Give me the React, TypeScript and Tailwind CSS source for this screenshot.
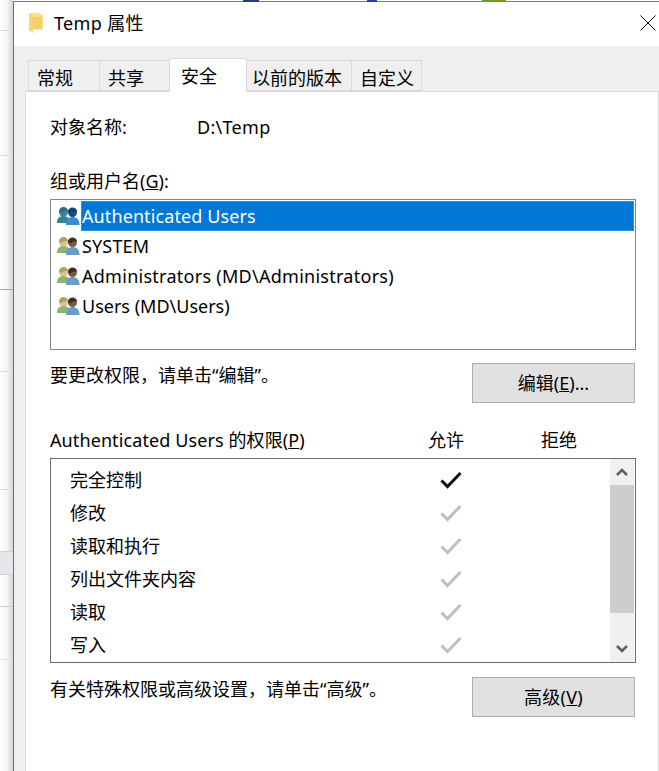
const sans = "font-['Noto_Sans','Noto_Sans_CJK_SC',sans-serif]";

function Folder() {
  return (
    <svg width="15" height="20" viewBox="0 0 15 20">
      <path d="M2 0h8l4 2v15H2z" fill="#fbe08e" />
      <path d="M0 0l4 1v19l-3-2H0z" fill="#f6d672" />
      <path d="M4 4h9v12H4z" fill="#f4cf66" />
      <path d="M4 16h10v1H4z" fill="#fdeeb8" />
    </svg>
  );
}

function Users({ blue }: { blue?: boolean }) {
  const leftHead = blue ? "#3f8198" : "#d8c48e";
  const leftHair = blue ? "#2d6f86" : "#b49f5c";
  const leftBody = blue ? "#2f8598" : "#8db56b";
  const rightHead = blue ? "#1c4e80" : "#7a5a40";
  const rightHair = blue ? "#163e68" : "#3e2e24";
  const rightBody = blue ? "#3d8bd0" : "#6b9bcb";
  return (
    <svg width="23" height="20" viewBox="0 0 23 20">
      <circle cx="6.500" cy="6" r="4.500" fill={leftHead} />
      <path d="M2 6a4.500 4.500 0 0 1 9-1c-3 0-5 0-6 2z" fill={leftHair} />
      <path d="M0 16c0-4 3-6 6.500-6s6.500 2 6.500 6v1H0z" fill={leftBody} />
      <circle cx="15.500" cy="6.500" r="4.500" fill={rightHead} />
      <path d="M11 6.500a4.500 4.500 0 0 1 9-1c-3 0-5 0-6 2z" fill={rightHair} />
      <path d="M9 18c0-4.500 3-7 6.500-7s7 2.500 7 7v1H9z" fill={rightBody} />
    </svg>
  );
}

function Check({ on }: { on?: boolean }) {
  return (
    <svg className="-mt-[2px]" width="22" height="18" viewBox="0 0 22 18" fill="none">
      <path d="M1.500 9.500l6 6L20.500 2" stroke={on ? "#111111" : "#bfbfbf"} strokeWidth="3" />
    </svg>
  );
}

function Btn({ children }: { children: React.ReactNode }) {
  return (
    <button className="flex h-[40px] w-[163px] shrink-0 items-center justify-center border border-[#adadad] bg-[#e1e1e1] text-[18px] text-black">
      {children}
    </button>
  );
}

function Tab({ label, active, w }: { label: string; active?: boolean; w: string }) {
  return active ? (
    <div className={`relative z-10 -mb-px -ml-px flex h-[34px] items-center border border-b-0 border-[#d9d9d9] bg-white pt-[2px] text-[18px] ${w}`}>
      {label}
    </div>
  ) : (
    <div className={`flex h-[31px] items-center border border-[#d9d9d9] pt-[6px] text-[18px] ${w}`}>
      {label}
    </div>
  );
}

const rows = ["完全控制", "修改", "读取和执行", "列出文件夹内容", "读取", "写入"];
const lines = [
  { h: 31, c: "border-[#dcdcdc]" },
  { h: 125, c: "border-[#dcdcdc]" },
  { h: 134, c: "border-[#a8a8a8]" },
  { h: 82, c: "border-[#dcdcdc]" },
  { h: 118, c: "border-[#dcdcdc]" },
  { h: 62, c: "border-[#d4d4d4]" },
  { h: 23, c: "border-[#d4d4d4] bg-[#e6e6ea]" },
  { h: 32, c: "border-[#c8ccd0]" },
  { h: 53, c: "border-[#e0e0e0]" },
];

export default function App() {
  return (
    <div className={`relative flex h-[771px] w-[659px] overflow-hidden bg-white text-black ${sans}`}>
      <span className="absolute top-0 left-[243px] z-20 h-[2px] w-[16px] bg-[#2a3a7a]" />
      <span className="absolute top-0 left-[367px] z-20 h-[2px] w-[10px] bg-[#2a35c8]" />
      <span className="absolute top-0 left-[482px] z-20 h-[2px] w-[24px] bg-[#6f9e10]" />
      <div className="w-[13px] shrink-0 bg-gradient-to-r from-white via-[#f6f6f6] to-[#d6d6d6]">
        {lines.map((l, i) => (
          <div key={i} style={{ height: l.h }} className={`border-b ${l.c}`} />
        ))}
      </div>
      <div className="mt-px flex w-[646px] flex-col border-t border-l border-t-[#7a7a7a] border-l-[#6e6e6e]">
        <div className="flex h-[44px] shrink-0 items-center bg-white pr-[3px] pb-[2px] pl-[15px]">
          <Folder />
          <span className="ml-[10px] text-[18px] tracking-[0.35px]">Temp 属性</span>
          <svg className="ml-auto" width="16" height="16" viewBox="0 0 16 16">
            <path d="M0.500 0.500l15 15M15.500 0.500l-15 15" stroke="#111" strokeWidth="1" />
          </svg>
        </div>
        <div className="flex flex-1 flex-col bg-[#efefef] pt-[11px] pl-[11px]">
          <div className="flex h-[34px] items-end pl-[3px]">
            <Tab label="常规" w="w-[72px] pl-[8px]" />
            <Tab label="共享" w="-ml-px w-[71px] pl-[8px]" />
            <Tab label="安全" active w="w-[78px] pl-[11px]" />
            <Tab label="以前的版本" w="-ml-px w-[106px] pl-[5px]" />
            <Tab label="自定义" w="-ml-px w-[71px] pl-[8px]" />
          </div>
          <div className="flex flex-1 flex-col border-t border-r border-l border-[#d9d9d9] bg-white pr-[22px] pl-[24px]">
            <div className="mt-[23px] flex h-[24px] items-center text-[18px]">
              <span className="w-[147px]">对象名称:</span>
              <span className="tracking-[0.3px]">D:\Temp</span>
            </div>
            <div className="mt-[30px] flex h-[24px] items-center text-[18px]">
              组或用户名(<span className="underline">G</span>):
            </div>
            <div className="mt-[6px] h-[151px] border border-[#828790] pt-px pr-px pl-[6px]">
              <div className="flex h-[30px] items-center">
                <Users blue />
                <span className="ml-[1px] flex h-[30px] flex-1 items-center border border-dotted border-[#e08a2a] bg-[#0078d7] text-[18px] tracking-[0.1px] text-white">
                  Authenticated Users
                </span>
              </div>
              <div className="flex h-[30px] items-center">
                <Users />
                <span className="ml-[2px] text-[18px] tracking-[0.15px]">SYSTEM</span>
              </div>
              <div className="flex h-[30px] items-center">
                <Users />
                <span className="ml-[2px] text-[18px] tracking-[0.27px]">Administrators (MD\Administrators)</span>
              </div>
              <div className="flex h-[30px] items-center">
                <Users />
                <span className="ml-[2px] text-[18px]">Users (MD\Users)</span>
              </div>
            </div>
            <div className="mt-[13px] flex items-start justify-between pr-px">
              <span className="text-[18px] leading-[25px]">要更改权限，请单击“编辑”。</span>
              <Btn>
                编辑(<span className="underline">E</span>)...
              </Btn>
            </div>
            <div className="mt-[24px] flex h-[26px] items-center text-[18px]">
              <span className="w-[378px] tracking-[0.1px]">
                Authenticated Users 的权限(<span className="underline">P</span>)
              </span>
              <span className="w-[113px]">允许</span>
              <span>拒绝</span>
            </div>
            <div className="mt-[5px] flex h-[205px] border border-[#6b6b6b]">
              <div className="flex flex-1 flex-col pt-[5px] pl-[19px]">
                {rows.map((r, i) => (
                  <div key={r} className="flex h-[33.4px] items-center text-[18px]">
                    <span className="w-[370px]">{r}</span>
                    <Check on={i === 0} />
                  </div>
                ))}
              </div>
              <div className="mr-[1px] flex w-[24px] flex-col bg-[#f0f0f0]">
                <div className="flex h-[26px] items-center justify-center">
                  <svg width="12" height="8" viewBox="0 0 12 8">
                    <path d="M1 7l5-5 5 5" fill="none" stroke="#606060" strokeWidth="2.600" />
                  </svg>
                </div>
                <div className="h-[128px] bg-[#cdcdcd]" />
                <div className="flex flex-1 items-center justify-center pt-[23px]">
                  <svg width="12" height="8" viewBox="0 0 12 8">
                    <path d="M1 1l5 5 5-5" fill="none" stroke="#606060" strokeWidth="2.600" />
                  </svg>
                </div>
              </div>
            </div>
            <div className="mt-[14px] flex items-start justify-between pr-px">
              <span className="text-[18px] leading-[25px]">有关特殊权限或高级设置，请单击“高级”。</span>
              <Btn>
                <span className="tracking-[0.3px]">
                  高级(<span className="underline">V</span>)
                </span>
              </Btn>
            </div>
          </div>
        </div>
      </div>
    </div>
  );
}
